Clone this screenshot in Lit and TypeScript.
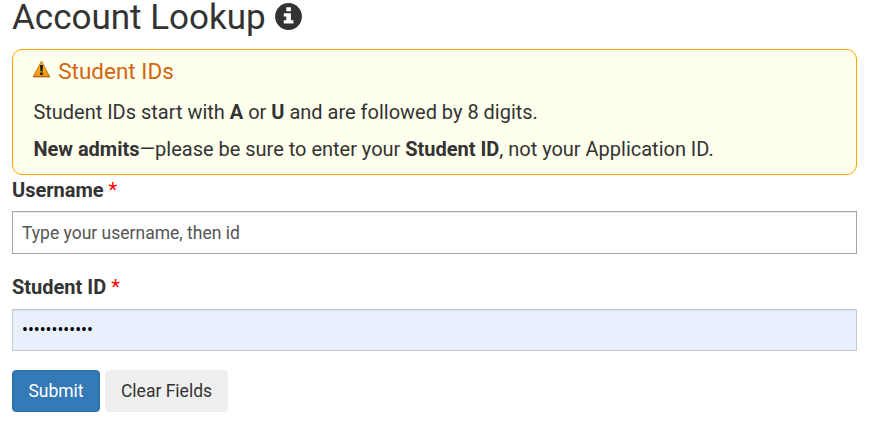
import { LitElement, html, css } from "lit";
import { customElement } from "lit/decorators.js";

@customElement("app-root")
class AppRoot extends LitElement {
  static styles = css`
    :host { display: block; box-sizing: border-box; width: 880px; height: 432px; overflow: hidden; padding: 0 23px 0 12px; background: #fff; color: #333; font: 20px/28px Roboto, sans-serif; }
    * { box-sizing: border-box; }
    h1 { margin: 0; height: 49px; display: flex; gap: 9px; font-size: 35px; line-height: 36px; font-weight: 400; }
    .info { width: 27px; height: 27px; margin-top: 2.5px; }
    .notice { height: 126px; border: 1px solid #ffa500; border-radius: 10px; background: #ffe; padding: 7px 20px 7px 20.4px; }
    h2 { margin: 0; display: flex; gap: 6.8px; font-size: 22.5px; line-height: 28px; height: 28px; font-weight: 400; color: #d2650f; }
    .warn { width: 19px; height: 18px; margin: 3px 0 0 -1px; }
    p { margin: 13px 0 0; line-height: 28px; letter-spacing: -0.01px; }
    p + p { margin-top: 9px; }
    label { display: block; font-weight: 700; height: 36px; line-height: 30px; }
    .req { color: #f00; font-weight: 400; }
    input { display: block; width: 100%; height: 43px; border: 1px solid #a5a5a5; padding: 0 9px; font: 17.5px Roboto, sans-serif; color: #333; outline: 0; box-shadow: inset 0 1px 1px rgba(0, 0, 0, .075); }
    input::placeholder { color: #555; opacity: 1; }
    .second { margin-top: 18px; height: 37px; }
    .filled { height: 42px; background: #e8f0fe; border-color: #c8c9cc; color: #000; padding-bottom: 1px; }
    .actions { display: flex; gap: 5px; margin-top: 19px; }
    button { height: 42px; border: 1px solid #efefef; border-radius: 4px; background: #efefef; color: #333; font: 17.5px Roboto, sans-serif; padding: 0 0 1px; width: 123px; }
    .primary { width: 88px; background: #337ab7; border-color: #2e6da4; color: #fff; }
  `;
  render() {
    return html`
      <h1><span>Account Lookup</span>
        <svg class="info" viewBox="0 0 27 27"><circle cx="13.5" cy="13.5" r="13.4" fill="#333"/><path fill="#fff" d="M11.3 4.2h4.6v4.1h-4.6zM8.8 10.3h7.1v7h2.5v3.3H8.8v-3.3h2.5v-3.7H8.8z"/></svg>
      </h1>
      <section class="notice">
        <h2><svg class="warn" viewBox="0 0 19 18"><defs><linearGradient id="g" x2="0" y2="1"><stop stop-color="#ffc52b"/><stop offset="1" stop-color="#ee8f0b"/></linearGradient></defs><path d="M9.5 1.2L17.7 16.6H1.3z" fill="url(#g)" stroke="#c77a18" stroke-width="1" stroke-linejoin="round"/><path d="M1 16.8h17" stroke="#a66318"/><path d="M8 5h3l-.5 6.5h-2zM8.2 12.6h2.6v2.3H8.2z" fill="#181818"/></svg><span>Student IDs</span></h2>
        <p>Student IDs start with <b>A</b> or <b>U</b> and are followed by 8 digits.</p>
        <p><b>New admits</b>—please be sure to enter your <b>Student ID</b>, not your Application ID.</p>
      </section>
      <label for="user">Username <span class="req">*</span></label>
      <input id="user" placeholder="Type your username, then id" />
      <label class="second" for="sid">Student ID <span class="req">*</span></label>
      <input class="filled" id="sid" type="password" value="123456789012" />
      <div class="actions"><button class="primary">Submit</button><button>Clear Fields</button></div>
    `;
  }
}
